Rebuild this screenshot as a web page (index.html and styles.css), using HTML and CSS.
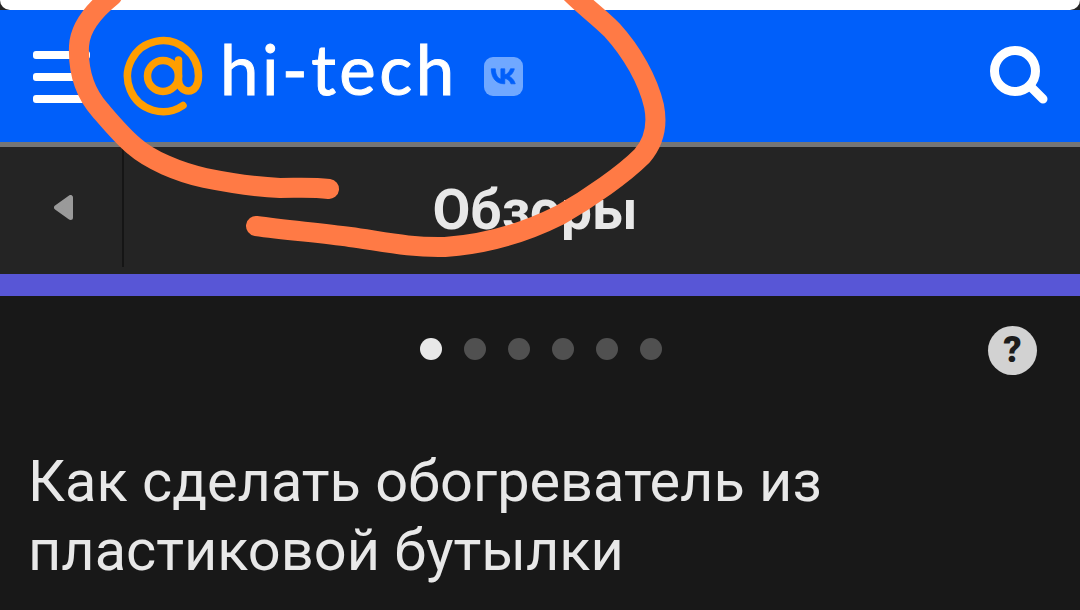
FILE: index.html
```html
<!DOCTYPE html>
<html lang="ru">
<head>
  <meta charset="UTF-8" />
  <meta name="viewport" content="width=device-width, initial-scale=1.0" />
  <title>Как сделать обогреватель из пластиковой бутылки</title>
  <link rel="stylesheet" href="styles.css">
</head>
<body>
  <div class="screen">
    <div class="status-bar"><div class="status-pill"></div></div>

    <header class="header">
      <div class="burger"><span></span><span></span><span></span></div>
      <svg class="at-logo" viewBox="0 0 80 80" aria-hidden="true">
        <circle cx="40" cy="40" r="15.500" />
        <path d="M60 69.500A35.500 35.500 0 1 1 75.500 40C75.500 49 71.500 55 65.500 55C60 55 55.500 50 55.500 44V24" />
      </svg>
      <span class="logo-text">hi-tech</span>
      <div class="vk-badge">
        <svg viewBox="0 0 24 24" aria-hidden="true">
          <path d="M12.870 17.200C7.400 17.200 4.280 13.450 4.150 7.200h2.740c.090 4.590 2.110 6.530 3.710 6.930V7.200h2.580v3.960c1.580-.170 3.240-1.970 3.800-3.960h2.580c-.430 2.440-2.230 4.240-3.510 4.980 1.280.600 3.330 2.170 4.110 5.020h-2.840c-.610-1.900-2.130-3.370-4.140-3.570v3.570h-.310z" />
        </svg>
      </div>
      <svg class="search" viewBox="0 0 60 60" aria-hidden="true">
        <circle cx="25" cy="25" r="20.500" />
        <path d="M41 41L53 53" />
      </svg>
    </header>

    <nav class="section-nav">
      <div class="back">
        <svg class="back-arrow" viewBox="0 0 19 25" aria-hidden="true">
          <path d="M16.500 2.500V22.500L2.500 12.500Z" />
        </svg>
      </div>
      <div class="section-title">Обзоры</div>
    </nav>
    <div class="accent-bar"></div>

    <main class="article">
      <div class="pager">
        <div class="dots">
          <span class="dot active"></span>
          <span class="dot"></span>
          <span class="dot"></span>
          <span class="dot"></span>
          <span class="dot"></span>
          <span class="dot"></span>
        </div>
        <div class="help">?</div>
      </div>
      <h1 class="article-title">Как сделать обогреватель из<br>пластиковой бутылки</h1>
    </main>

    <!-- пометка поверх скриншота -->
    <svg class="scribble" viewBox="0 0 1080 610" aria-hidden="true">
      <path d="M112 -4C92 12 80 28 79 46C78 70 84 92 100 110C112 124 122 136 134 146C150 160 178 172 205 178C230 183 255 187 280 188C298 188 312 187 329 189" />
      <path d="M572 -6C584 6 598 16 612 30C632 52 648 80 654 106C658 126 654 142 642 156C624 174 590 198 560 215C530 230 490 244 445 247C410 248 380 241 350 237C320 233 285 230 256 226" />
    </svg>
  </div>
</body>
</html>
```

FILE: styles.css
```css
* {
  margin: 0;
  padding: 0;
  box-sizing: border-box;
}

body {
  background: #181818;
  font-family: Roboto, 'Liberation Sans', sans-serif;
  overflow: hidden;
}

.screen {
  position: relative;
  width: 1080px;
  height: 610px;
  overflow: hidden;
}

.status-bar {
  height: 10px;
  background: #242424;
}

.status-pill {
  height: 10px;
  background: white;
  border-radius: 0 0 18px 18px;
}

.header {
  height: 132px;
  background: #005ffa;
  display: flex;
  align-items: center;
  padding-left: 33px;
}

.burger {
  width: 57px;
  display: flex;
  flex-direction: column;
  gap: 14px;
  margin-right: 33px;
  margin-top: 2px;
}

.burger span {
  height: 8px;
  background: white;
  border-radius: 3px;
}

.at-logo {
  width: 80px;
  height: 80px;
  fill: none;
  stroke: #ff9e00;
  stroke-width: 7.500;
  stroke-linecap: round;
}

.logo-text {
  font-family: Lato, sans-serif;
  font-size: 69px;
  font-weight: 400;
  -webkit-text-stroke: 1px white;
  color: white;
  margin-left: 17px;
  margin-top: -16px;
  letter-spacing: 3.500px;
}

.vk-badge {
  width: 39px;
  height: 39px;
  margin-left: 26px;
  background: #70a8ff;
  border-radius: 9px;
  display: flex;
  align-items: center;
  justify-content: center;
}

.vk-badge svg {
  width: 36px;
  height: 36px;
  fill: #005ffa;
  stroke: #005ffa;
  stroke-width: 0.500;
}

.search {
  width: 60px;
  height: 60px;
  margin-left: auto;
  margin-right: 30px;
  fill: none;
  stroke: white;
  stroke-width: 9;
  stroke-linecap: round;
}

.section-nav {
  height: 132px;
  background: #242424;
  border-top: 5px solid #757575;
  display: flex;
  position: relative;
}

.back {
  width: 124px;
  height: 120px;
  border-right: 2px solid #151515;
  display: flex;
  align-items: center;
  padding-left: 54px;
}

.back-arrow {
  width: 19px;
  height: 25px;
  fill: #9a9a9a;
  stroke: #9a9a9a;
  stroke-width: 5;
  stroke-linejoin: round;
  margin-top: 1px;
}

.section-title {
  flex: 1;
  text-align: center;
  font-size: 55px;
  font-weight: 700;
  color: #e8e8e8;
  line-height: 126px;
  padding-right: 134px;
}

.accent-bar {
  height: 22px;
  background: #5856d6;
}

.article {
  background: #181818;
  height: 314px;
  padding: 0 30px;
}

.pager {
  position: relative;
  height: 106px;
  display: flex;
  align-items: center;
  justify-content: center;
  padding-left: 2px;
}

.dots {
  display: flex;
  gap: 22px;
}

.dot {
  width: 22px;
  height: 22px;
  border-radius: 50%;
  background: #505050;
}

.dot.active {
  background: #e8e8e8;
}

.help {
  position: absolute;
  right: 13px;
  top: 30px;
  width: 49px;
  height: 49px;
  border-radius: 50%;
  background: #d2d2d2;
  color: #1c1c1c;
  font-size: 36px;
  font-weight: 900;
  line-height: 49px;
  text-align: center;
}

.article-title {
  margin-top: 45px;
  margin-left: -2px;
  font-size: 57.700px;
  font-weight: 400;
  line-height: 69px;
  color: #e8e8e8;
}

.scribble {
  position: absolute;
  inset: 0;
  width: 1080px;
  height: 610px;
  fill: none;
  stroke: #ff7a45;
  stroke-width: 20;
  stroke-linecap: round;
  stroke-linejoin: round;
}
```
